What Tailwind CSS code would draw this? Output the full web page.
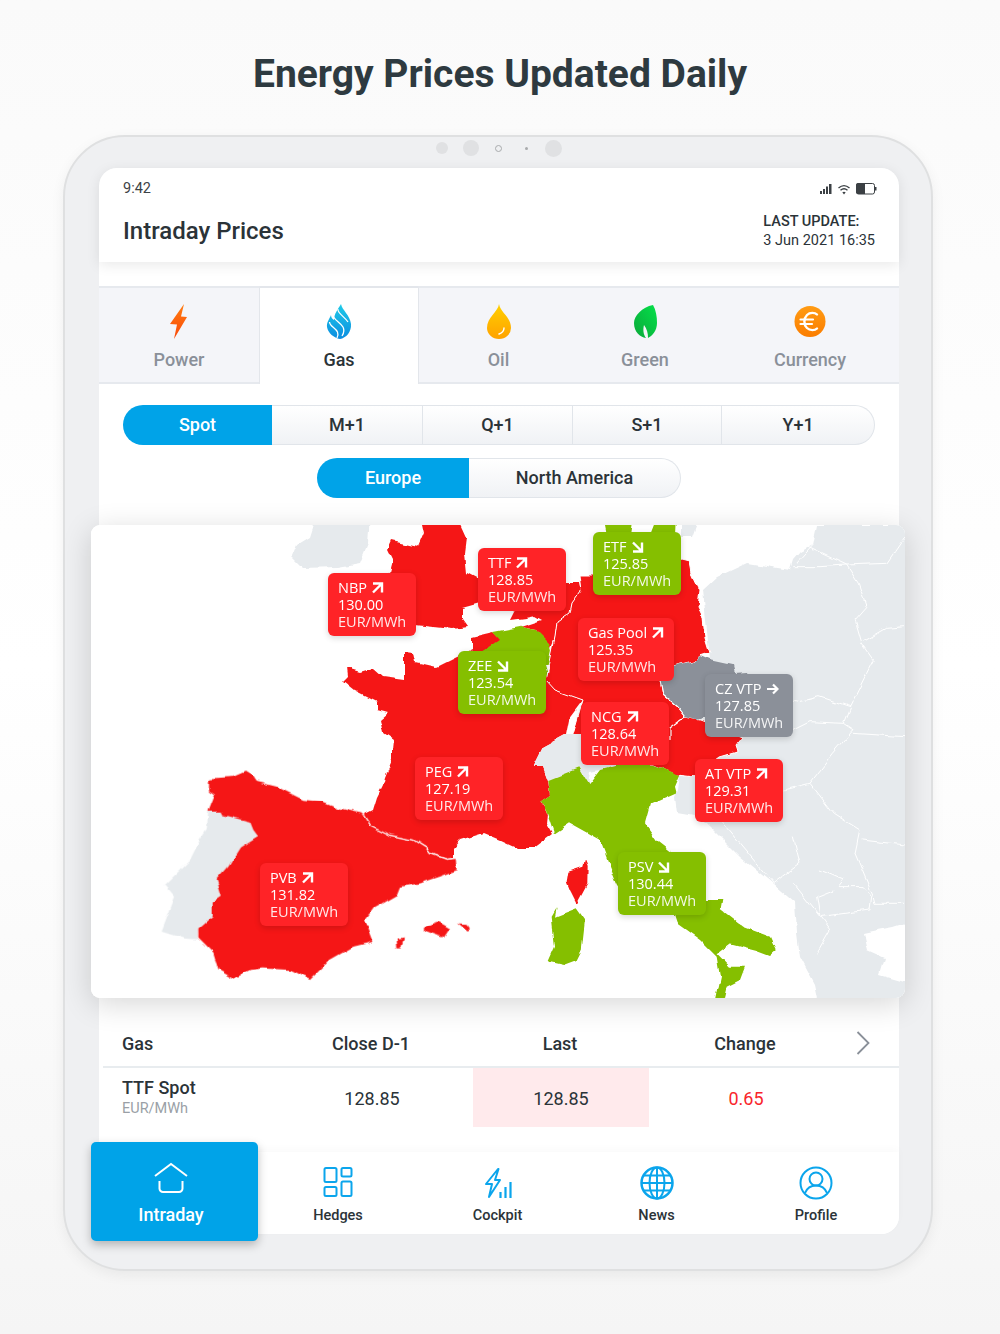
<!DOCTYPE html>
<html lang="en">

<head>
  <meta charset="UTF-8">
  <title>Energy Prices Updated Daily</title>
  <script src="https://cdn.jsdelivr.net/npm/@tailwindcss/browser@4"></script>
</head>

<body class="font-['Roboto',sans-serif] text-[#2b3338]">
  <div class="w-[1000px] h-[1334px] overflow-hidden bg-gradient-to-b from-[#fafafa] via-white to-[#f5f5f5]">
    <h1 class="pt-[49px] h-[135px] text-center text-[39px] leading-[50px] font-bold text-[#2e3a40]">Energy Prices Updated Daily</h1>

    <!-- tablet -->
    <div class="relative ml-[63px] w-[870px] h-[1136px] pt-[31px] rounded-[62px] bg-[#eff0f2] border-2 border-[#dfe0e1] shadow-[0_4px_14px_rgba(0,0,0,0.06)]">
      <div class="absolute top-[1px] left-[2px] right-0 flex items-center justify-center h-[20px]">
        <span class="w-[12px] h-[12px] rounded-full bg-[#e0e1e3] mr-[15px]"></span>
        <span class="w-[16px] h-[16px] rounded-full bg-[#e0e1e3] mr-[15.5px]"></span>
        <span class="w-[7px] h-[7px] rounded-full border-[1.5px] border-[#a9abad] mr-[23px]"></span>
        <span class="w-[3px] h-[3px] rounded-full bg-[#a9abad] mr-[17px]"></span>
        <span class="w-[17px] h-[17px] rounded-full bg-[#e0e1e3]"></span>
      </div>

      <!-- screen -->
      <div class="ml-[34px] w-[800px] h-[1066px] rounded-[18px] bg-white flex flex-col">
        <div class="h-[94px] px-[24px] rounded-t-[18px] shadow-[0_3px_14px_rgba(0,0,0,0.09)]">
          <div class="flex items-center justify-between h-[40px] pt-[2px]">
            <span class="text-[14.5px] text-[#3c4246]">9:42</span>
            <svg width="58" height="14" viewBox="0 0 58 14" class="mr-[-2px]">
              <g fill="#3b4044"><rect x="1" y="9" width="2" height="3"/><rect x="4" y="7" width="2" height="5"/><rect x="7" y="4.500" width="2" height="7.500"/><rect x="10" y="2" width="2.500" height="10"/></g>
              <path d="M19.500 6c3.500-3 7.500-3 11 0M21.500 8.300c2.300-2 4.700-2 7 0" fill="none" stroke="#3b4044" stroke-width="1.400"/>
              <path d="M23.300 10.300c1-.8 2.400-.8 3.400 0L25 12.500z" fill="#3b4044"/>
              <rect x="37.500" y="1.500" width="18" height="10.500" rx="2" fill="#fff" stroke="#3b4044"/>
              <path d="M39 1h7v11h-7a2 2 0 0 1-2-2V3a2 2 0 0 1 2-2z" fill="#3b4044"/>
              <rect x="56" y="5" width="1.500" height="3.500" fill="#3b4044"/>
            </svg>
          </div>
          <div class="flex items-start justify-between">
            <span class="text-[24px] leading-[46px] font-medium text-[#2b3338]">Intraday Prices</span>
            <div class="text-[14.5px] leading-[19px] text-[#2b3338]">
              <div class="font-medium mt-[4px]">LAST UPDATE:</div>
              <div>3 Jun 2021 16:35</div>
            </div>
          </div>
        </div>

        <!-- commodity tabs -->
        <div class="mt-[24px] h-[98px] flex bg-[#f4f5f9] border-y-2 border-[#e6e9ee] text-[18px] font-medium text-[#8a9099]">
          <div class="w-[160px] flex flex-col items-center pt-[16px]">
            <svg width="20" height="36" viewBox="0 0 20 36">
              <defs><linearGradient id="b" x1="0" y1="0" x2="0" y2="1"><stop offset="0" stop-color="#ff7d12"/><stop offset="1" stop-color="#f9480a"/></linearGradient></defs>
              <path d="M15 0 1 20l7 .500-3 14.500L18 13l-6-.500z" fill="url(#b)"/>
            </svg>
            <span class="mt-[7px] leading-[26px]">Power</span>
          </div>
          <div class="w-[160px] -my-[2px] h-[98px] flex flex-col items-center pt-[16px] bg-white border-x-[1.5px] border-t-2 border-[#e3e6eb] border-b-0 rounded-t-[2px] text-[#2b3338] z-10">
            <svg width="26" height="36" viewBox="0 0 26 36">
              <defs><linearGradient id="f" x1="0" y1="0" x2="0" y2="1"><stop offset="0" stop-color="#1fcbe8"/><stop offset="1" stop-color="#0b8de0"/></linearGradient></defs>
              <path d="M15 0c1 6 9 11 10 20 .600 8-5 14-11 15-6-1-12-6-13-12-.5-5 2.500-8 4-12 0 2 1 4 3 5 0-6 4-11 7-16z" fill="url(#f)"/>
              <path d="M7 10c-1 5 7 8 10 13 1.500 3 1 6-1 9M3.500 18c0 4 6 6 8 10 .8 2 .5 4-.5 6M12 5c-1 4 7 8 10 13" fill="none" stroke="#fff" stroke-width="1.300"/>
            </svg>
            <span class="mt-[7px] leading-[26px]">Gas</span>
          </div>
          <div class="w-[159px] flex flex-col items-center pt-[16px]">
            <svg width="26" height="36" viewBox="0 0 26 36">
              <defs><linearGradient id="o" x1="0" y1="0" x2="0" y2="1"><stop offset="0" stop-color="#ffd000"/><stop offset="1" stop-color="#ffa200"/></linearGradient></defs>
              <path d="M13 0c1 8 12 13 12 24a12 11 0 0 1-24 0C1 13 12 8 13 0z" fill="url(#o)"/>
              <path d="M18 24c0 3-2 5-5 6" fill="none" stroke="#fff" stroke-width="1.400" stroke-linecap="round"/>
            </svg>
            <span class="mt-[7px] leading-[26px]">Oil</span>
          </div>
          <div class="w-[134px] flex flex-col items-center pt-[16px]">
            <svg width="26" height="36" viewBox="0 0 26 36">
              <defs><linearGradient id="l" x1="1" y1="0" x2="0" y2="1"><stop offset="0" stop-color="#05e04a"/><stop offset="1" stop-color="#0aa83a"/></linearGradient></defs>
              <path d="M21 1c3 5 4 12 4 18 0 8-5 13-9 15 0-5-1-9-4-13-1 4-1 9 2 13-6-1-12-6-12-15C2 12 10 3 21 1z" fill="url(#l)"/>
            </svg>
            <span class="mt-[7px] leading-[26px]">Green</span>
          </div>
          <div class="w-[187px] pl-[9px] flex flex-col items-center pt-[16px]">
            <svg width="36" height="36" viewBox="0 0 36 36">
              <defs><linearGradient id="c" x1="0" y1="0" x2="0" y2="1"><stop offset="0" stop-color="#ff9b14"/><stop offset="1" stop-color="#fb7d00"/></linearGradient></defs>
              <circle cx="18" cy="17.500" r="15.500" fill="url(#c)"/>
              <path d="M25 10.500c-2-2-7-2.500-10 .500-3.500 3.500-3.500 9.500 0 13 3 3 8 2.500 10 .500" fill="none" stroke="#fff" stroke-width="2.400" stroke-linecap="round"/>
              <path d="M8.500 15.500H21M8.500 20H20" fill="none" stroke="#fff" stroke-width="2.200" stroke-linecap="round"/>
            </svg>
            <span class="mt-[7px] leading-[26px]">Currency</span>
          </div>
        </div>

        <!-- term switch -->
        <div class="mt-[21px] ml-[24px] w-[752px] h-[40px] flex text-[18px] font-medium leading-[38px] text-center">
          <div class="w-[149px] h-[40px] rounded-l-full bg-[#00a3e8] text-white leading-[40px]">Spot</div>
          <div class="flex-1 flex rounded-r-full border border-l-0 border-[#e1e5ea] bg-gradient-to-b from-white to-[#f0f2f5]">
            <div class="w-[151px] border-r border-[#e1e5ea]">M+1</div>
            <div class="w-[150px] border-r border-[#e1e5ea]">Q+1</div>
            <div class="w-[149px] border-r border-[#e1e5ea]">S+1</div>
            <div class="flex-1">Y+1</div>
          </div>
        </div>

        <!-- region switch -->
        <div class="mt-[13px] ml-[218px] w-[364px] h-[40px] flex text-[18px] font-medium leading-[38px] text-center">
          <div class="w-[152px] h-[40px] rounded-l-full bg-[#00a3e8] text-white leading-[40px]">Europe</div>
          <div class="flex-1 rounded-r-full border border-l-0 border-[#e1e5ea] bg-gradient-to-b from-white to-[#f0f2f5]">North America</div>
        </div>

        <!-- map -->
        <div id="map" class="relative mt-[27px] -ml-[8px] w-[814px] h-[473px] shrink-0 rounded-[9px] overflow-hidden bg-white shadow-[0_6px_30px_rgba(0,0,0,0.16)] z-10">
          <svg width="814" height="473" viewBox="91 525 814 473" class="block">
            <defs>
              <filter id="coast" x="0" y="0" width="100%" height="100%" filterUnits="objectBoundingBox">
                <feTurbulence type="fractalNoise" baseFrequency="0.07" numOctaves="2" seed="4" result="n"/>
                <feDisplacementMap in="SourceGraphic" in2="n" scale="6" xChannelSelector="R" yChannelSelector="G"/>
                <feGaussianBlur stdDeviation="0.35"/>
              </filter>
            </defs>
            <rect x="91" y="525" width="814" height="473" fill="#fff"/>
            <g filter="url(#coast)" stroke-linejoin="round">
            <!-- east europe -->
            <path fill="#e6eaed" d="M703 590 717 577 747 563 790 570 793 560 800 552 813 545 817 525H915V1008H820L815 985 800 957 797 933 795 903 772 883 740 857 713 830 700 817 677 813 675 797 678 790 680 775 710 660z"/>
            <path fill="#fff" d="M915 920 893 927 877 930 863 933 867 950 885 958 880 975 915 985z"/>
            <path fill="#e6eaed" d="M681 515H700L692 537H681zM845 940l12-4 4 8-8 6z"/>
            <g transform="translate(500 520) scale(.3333)" fill="none" stroke="#fff" stroke-width="3">
              <path d="M880 140 960 140 1040 135 1075 190 1100 260 1065 300 1085 370 1120 420 1100 460 1050 560 1030 610 1060 630 1000 700 930 790 850 810"/>
              <path d="M1090 365 1160 325 1215 320M1060 640 1215 650M880 540 900 545 960 530 1050 560M840 640 880 630 930 605 1030 610"/>
              <path d="M930 790 1000 880 1080 930 1065 1000 1120 1130 1125 1150 1215 1150M1085 960 1215 975"/>
              <path d="M960 1050 1030 1080 1015 1100 1090 1100 1115 1130 1110 1170 960 1190 950 1130 1000 1110M880 1090 960 1190 990 1230 950 1300"/>
              <path d="M660 900 820 1090 900 1030 880 950M920 80 1040 135 1160 130 1215 50M890 130 940 75"/>
            </g>

            <!-- ireland, uk -->
            <path fill="#e6eaed" d="M317 515H370L368 543 360 563 337 567 303 568 292 557 297 545 310 537z"/>
            <path fill="#f51818" d="M420 515H457L467 537 465 553 467 573 480 580V603L462 608V620L467 627 453 629 415 625 350 600 390 572 393 560 388 550 392 541 418 547 424 533z"/>

            <!-- france -->
            <path fill="#f51818" d="M472 637 493 632 560 690 583 700 568 720 565 735 543 747 533 767 543 767 548 780 550 795 540 802 548 813 547 823 553 833 533 848 517 848 500 840 483 833 460 840 453 848 453 858 447 859 430 853 427 848 413 840 390 835 370 825 363 815 373 810 377 797 383 785 385 777 392 760 392 750 393 740 383 733 380 720 388 713 377 710 377 702 353 690 343 682 348 677 347 668 360 672 373 668 383 677 405 680 405 652 413 653 415 662 437 667 457 657 472 650z"/>

            <!-- benelux -->
            <path fill="#f51818" d="M520 600 565 583H578L580 592 572 603 570 613 557 622 555 637 550 650 537 630 520 627 530 624 542 620 535 616 525 618 510 620z"/>
            <path fill="#85bf00" d="M493 632 520 627 537 630 550 643 555 660 545 665 548 675 540 700H470V660L500 640z"/>

            <!-- germany, poland, austria -->
            <path fill="#f51818" stroke="#fff" stroke-width="1" d="M578 575 640 575 682 560 690 562 692 573 700 590 698 607 703 617 705 637 710 653 700 656 693 662 673 667 660 680 663 695 677 707 685 717 700 720 743 737 735 747 737 753 720 758 695 777 677 775 653 765 600 765 570 745 583 700 555 690 546 680 555 637 557 622 570 613 572 603 580 592z"/>
            <path fill="#e6eaed" d="M533 767 543 747 565 735 590 735 600 765H618L600 770 590 772 588 785 578 768 565 785 548 780 543 767z"/>
            <path fill="#8b9099" d="M660 680 673 667 693 662 700 656 710 660 733 665 735 673 747 672 750 680 730 700 705 717 697 720 685 717 677 707 663 695z"/>
            <path fill="none" stroke="#fff" stroke-width="1.200" d="M660 680 663 695 677 707 685 717 670 728 670 740"/>

            <!-- denmark -->
            <path fill="#85bf00" d="M603 515H633L630 535H607zM650 535 657 517 675 515 674 535z"/>

            <!-- iberia + islands -->
            <g transform="translate(90 520) scale(.3333)">
              <path fill="#e6eaed" d="M355 875 395 875 400 885 480 905 490 930 505 950 450 985 415 1040 380 1080 395 1130 365 1150 365 1190 325 1225 322 1258 280 1255 215 1235 240 1170 255 1130 225 1095 260 1060 300 1020 330 960 350 930z"/>
              <path fill="#f51818" d="M360 775 430 770 465 755 490 770 500 785 560 800 640 840 700 845 750 865 815 880 840 915 900 945 970 960 1010 985 1020 1000 1070 1018 1100 1015 1103 1050 1050 1070 990 1090 930 1100 920 1125 850 1165 825 1200 850 1265 790 1280 720 1320 660 1380 600 1350 520 1345 480 1350 430 1375 385 1350 370 1300 325 1255 325 1225 365 1190 365 1150 395 1130 380 1080 415 1040 450 985 505 950 490 930 480 905 400 885 395 875 355 875 375 825 360 815z"/>
              <path fill="#f51818" d="M1005 1220 1045 1205 1080 1225 1060 1255 1030 1245 1005 1235zM1105 1210 1130 1212 1140 1225 1130 1232zM920 1258 945 1255 935 1285 922 1285z"/>
              <path fill="none" stroke="#fff" stroke-width="3.500" d="M820 885 840 915 900 945 970 960 1010 985 1020 1000 1070 1018 1100 1015"/>
            </g>

            <!-- italy, corsica, sardinia -->
            <g transform="translate(500 520) scale(.3333)">
              <path fill="#85bf00" d="M145 780 235 745 265 795 300 750 355 735 460 735 540 765 525 800 530 820 450 855 435 910 470 960 515 995 620 1140 670 1140 665 1170 730 1220 810 1250 828 1290 810 1305 770 1290 690 1270 650 1300 690 1340 735 1340 720 1380 680 1400 665 1465H640L660 1370 650 1310 600 1260 530 1210 520 1180 400 1170 350 1090 330 1040 300 960 210 910 165 940 145 880 120 845 150 825z"/>
              <path fill="#f51818" d="M255 1020 263 1040 262 1090 230 1150 210 1110 200 1085 205 1055 250 1040z"/>
              <path fill="#85bf00" d="M170 1165 165 1190 230 1165 255 1200 245 1290 230 1320 190 1335 145 1325 165 1280 155 1190z"/>
            </g>
            </g>
          </svg>
        </div>

        <!-- table -->
        <div class="h-[70px] ml-[4px] grid grid-cols-[176px_184px_194px_176px_1fr] items-center border-b-2 border-[#e8ecef] text-[18px] font-medium pt-[22px] text-center">
          <span class="pl-[19px] text-left">Gas</span>
          <span>Close D-1</span>
          <span>Last</span>
          <span>Change</span>
          <svg width="14" height="24" viewBox="0 0 14 24" class="ml-[23px]"><path d="M1.500 1 12.500 12 1.500 23" fill="none" stroke="#8a9099" stroke-width="1.800"/></svg>
        </div>
        <div class="h-[59px] flex items-center text-[18px]">
          <div class="w-[175px] pl-[23px]">
            <div class="font-medium leading-[22px]">TTF Spot</div>
            <div class="text-[14.5px] leading-[19px] text-[#9a9fa6]">EUR/MWh</div>
          </div>
          <div class="w-[199px] pr-[3px] pt-[2px] text-center">128.85</div>
          <div class="w-[176px] h-full bg-[#ffeaec] flex items-center justify-center pt-[2px]">128.85</div>
          <div class="w-[194px] pt-[2px] text-center text-[#f9252b]">0.65</div>
        </div>

        <!-- bottom nav -->
        <div class="relative mt-[25px] h-[82px] flex-1 flex rounded-b-[18px] bg-white shadow-[0_-3px_8px_rgba(0,0,0,0.025)] text-[14.5px] font-medium text-center">
          <div class="relative -ml-[8px] -mt-[10px] w-[167px] h-[99px] shrink-0 rounded-[5px] bg-[#00a3e8] text-white text-[18px] shadow-[0_4px_10px_rgba(0,0,0,0.25)] flex flex-col items-center pt-[20px] pr-[7px] z-20">
            <svg width="36" height="32" viewBox="0 0 36 32">
              <path d="M2 14 18 2l16 12M6.500 19v7.500a3.500 3.500 0 0 0 3.500 3.500h16a3.500 3.500 0 0 0 3.500-3.500V19" fill="none" stroke="#fff" stroke-width="2"/>
            </svg>
            <span class="mt-[8px] leading-[26px]">Intraday</span>
          </div>
          <div class="w-[160px] flex flex-col items-center pt-[15px]">
            <svg width="30" height="30" viewBox="0 0 30 30" fill="none" stroke="#0ba5ec" stroke-width="2">
              <rect x="1.500" y="1" width="12" height="14" rx="1.500"/><rect x="18.500" y="1" width="10" height="8.500" rx="1.500"/><rect x="1.500" y="20" width="12" height="9" rx="1.500"/><rect x="18.500" y="14.500" width="10" height="14.500" rx="1.500"/>
            </svg>
            <span class="mt-[9px] leading-[20px]">Hedges</span>
          </div>
          <div class="w-[159px] flex flex-col items-center pt-[15px]">
            <svg width="30" height="32" viewBox="0 0 30 32" fill="none" stroke="#0ba5ec" stroke-width="2">
              <path d="M15 2 3 17h6L6 30l11-17h-5l3.500-11z" stroke-linejoin="round"/>
              <path d="M17.500 25v6M22.500 20v11M27.500 15v16" stroke-width="2.200"/>
            </svg>
            <span class="mt-[7px] leading-[20px]">Cockpit</span>
          </div>
          <div class="w-[159px] flex flex-col items-center pt-[14px]">
            <svg width="34" height="34" viewBox="0 0 34 34" fill="none" stroke="#0ba5ec" stroke-width="2">
              <circle cx="17" cy="17" r="15.500" stroke-width="2.500"/>
              <ellipse cx="17" cy="17" rx="7.500" ry="15.500"/>
              <path d="M17 1.500v31M1.500 17h31M4 9.500h26M4 24.500h26"/>
            </svg>
            <span class="mt-[6px] leading-[20px]">News</span>
          </div>
          <div class="w-[160px] flex flex-col items-center pt-[14px]">
            <svg width="34" height="34" viewBox="0 0 34 34" fill="none" stroke="#0ba5ec" stroke-width="2">
              <circle cx="17" cy="17" r="15.500"/>
              <circle cx="17" cy="13" r="6.500"/>
              <path d="M6 27c2-5 6-7.500 11-7.500s9 2.500 11 7.500"/>
            </svg>
            <span class="mt-[6px] leading-[20px]">Profile</span>
          </div>
        </div>
      </div>
    </div>
  </div>

  <script>
    // price tags on the map, positions are the map's own
    const arrows = {
      up: '<path d="M2 2.500h9v9M11 2.500 2 11.500" fill="none" stroke="#fff" stroke-width="2.400"/>',
      down: '<path d="M2 11.500h9v-9M11 11.500 2 2.500" fill="none" stroke="#fff" stroke-width="2.400"/>',
      flat: '<path d="M1 7h10M7 2.500 11.500 7 7 11.500" fill="none" stroke="#fff" stroke-width="2.200"/>',
    };
    const tags = [
      { name: "NBP", value: "130.00", dir: "up", x: 237, y: 48, cls: "bg-[#ff2327]" },
      { name: "TTF", value: "128.85", dir: "up", x: 387, y: 23, cls: "bg-[#ff2327]" },
      { name: "ETF", value: "125.85", dir: "down", x: 502, y: 7, cls: "bg-[#85bf00]" },
      { name: "Gas Pool", value: "125.35", dir: "up", x: 487, y: 93, w: 96, cls: "bg-[#ff2327]" },
      { name: "ZEE", value: "123.54", dir: "down", x: 367, y: 126, cls: "bg-[#85bf00]" },
      { name: "CZ VTP", value: "127.85", dir: "flat", x: 614, y: 149, cls: "bg-[#8b9099]" },
      { name: "NCG", value: "128.64", dir: "up", x: 490, y: 177, cls: "bg-[#ff2327]" },
      { name: "AT VTP", value: "129.31", dir: "up", x: 604, y: 234, cls: "bg-[#ff2327]" },
      { name: "PEG", value: "127.19", dir: "up", x: 324, y: 232, cls: "bg-[#ff2327]" },
      { name: "PVB", value: "131.82", dir: "up", x: 169, y: 338, cls: "bg-[#ff2327]" },
      { name: "PSV", value: "130.44", dir: "down", x: 527, y: 327, cls: "bg-[#85bf00]" },
    ];

    const map = document.getElementById("map");
    for (const t of tags) {
      map.innerHTML += `
      <div class="absolute h-[63px] rounded-[6px] pl-[10px] pt-[6px] text-white font-['Open_Sans',sans-serif] text-[14.5px] leading-[17px] font-medium shadow-[0_2px_6px_rgba(0,0,0,0.16)] ${t.cls}" style="left:${t.x}px;top:${t.y}px;width:${t.w || 88}px">
        <div class="flex items-center gap-[4px]">${t.name}<svg width="13" height="14" viewBox="0 0 13 14">${arrows[t.dir]}</svg></div>
        <div>${t.value}</div>
        <div class="font-normal text-white/90">EUR/MWh</div>
      </div>`;
    }
  </script>
</body>

</html>
